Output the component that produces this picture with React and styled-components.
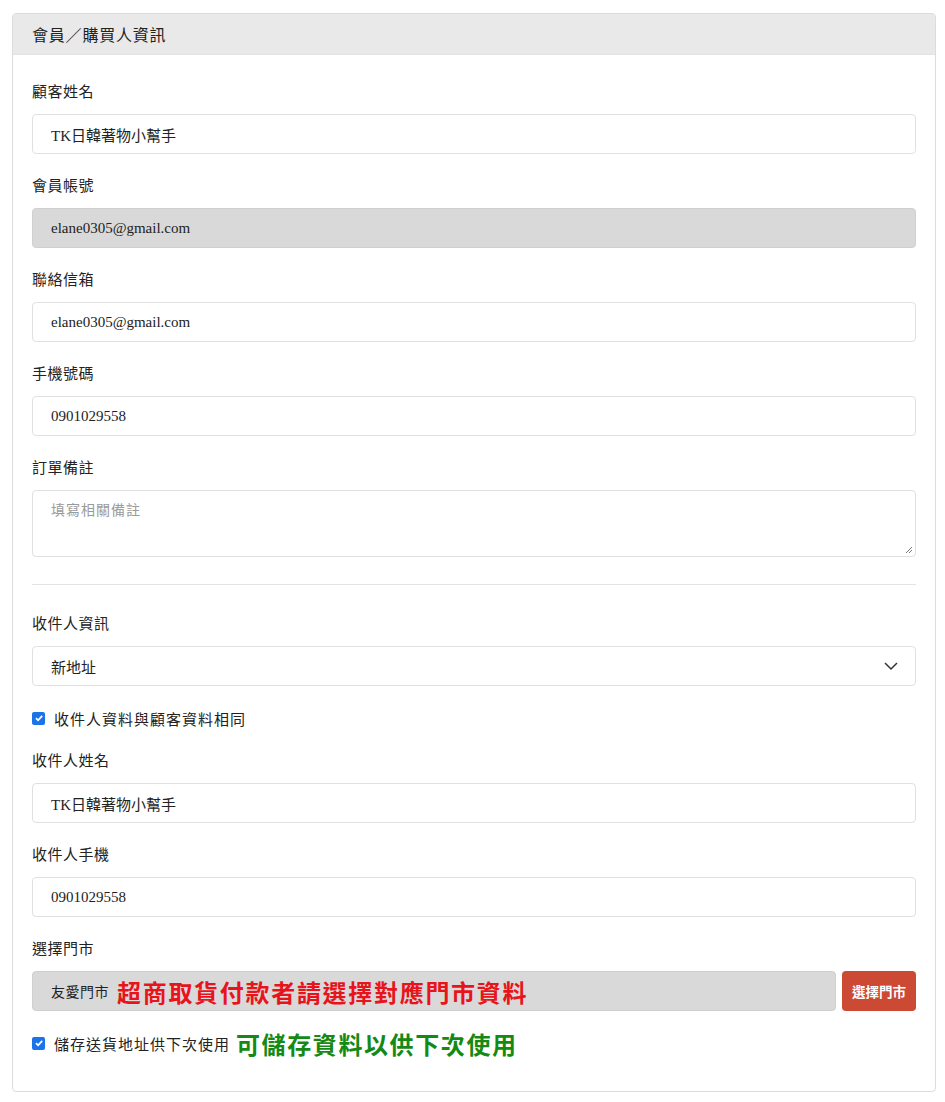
import React from 'react'
import styled, { createGlobalStyle } from 'styled-components'

const GlobalStyle = createGlobalStyle`
  html, body {
    margin: 0;
    padding: 0;
    background: #ffffff;
  }
  body {
    font-family: "Noto Sans CJK TC", "Noto Sans", sans-serif;
    color: #212529;
  }
`

const Page = styled.div`
  padding: 13px 9px 12px 12px;
`

const Card = styled.div`
  border: 1px solid #dcdcdc;
  border-radius: 4px;
  background: #ffffff;
  overflow: hidden;
`

const CardHeader = styled.div`
  background: #e9e9e9;
  height: 40px;
  display: flex;
  align-items: center;
  padding: 0 19px;
  font-size: 16px;
  letter-spacing: 0.8px;
  color: #222;
  border-bottom: 1px solid #e2e2e2;
`

const CardBody = styled.div`
  padding: 26px 19px 36px 19px;
`

const Group = styled.div`
  margin-bottom: ${p => p.$mb ?? 21}px;
`

const Label = styled.div`
  font-size: 15px;
  letter-spacing: 0.5px;
  line-height: 20px;
  height: 20px;
  margin-bottom: 13px;
  color: #222;
`

const Input = styled.div`
  box-sizing: border-box;
  height: 40px;
  border: 1px solid #e0e0e0;
  border-radius: 4px;
  background: ${p => (p.$disabled ? '#d9d9d9' : '#ffffff')};
  border-color: ${p => (p.$disabled ? '#cfcfcf' : '#e0e0e0')};
  padding: 0 18px;
  display: flex;
  align-items: center;
  font-family: "Liberation Serif", "Noto Sans CJK TC", serif;
  font-size: 15px;
  color: #222;
  flex: 1;
  min-width: 0;
`

const TextArea = styled.div`
  box-sizing: border-box;
  height: 67px;
  border: 1px solid #e0e0e0;
  border-radius: 4px;
  padding: 8px 18px;
  font-size: 14px;
  color: #9a9a9a;
  letter-spacing: 1px;
  position: relative;
`

const Grip = styled.svg`
  position: absolute;
  right: 2px;
  bottom: 2px;
`

const Divider = styled.hr`
  border: none;
  border-top: 1px solid #e3e3e3;
  margin: 27px 0 28px 0;
`

const Select = styled(Input)`
  justify-content: space-between;
  font-family: "Noto Sans CJK TC", sans-serif;
  padding-right: 16px;
`

const CheckRow = styled.label`
  display: flex;
  align-items: center;
  gap: 9px;
  font-size: 15px;
  letter-spacing: 1px;
  color: #222;
  height: 24px;
  margin: ${p => p.$m || '0'};
`

const Box = styled.span`
  width: 13px;
  height: 13px;
  border-radius: 2px;
  background: #1a73e8;
  display: inline-flex;
  align-items: center;
  justify-content: center;
  flex: none;
`

const StoreRow = styled.div`
  display: flex;
  gap: 6px;
`

const StoreInput = styled(Input)`
  font-family: "Noto Sans CJK TC", sans-serif;
  font-size: 14px;
  letter-spacing: 0.5px;
  gap: 6px;
`

const Red = styled.span`
  color: #e8141b;
  font-size: 24px;
  font-weight: 700;
  letter-spacing: 1.7px;
  margin-left: 2px;
`

const Green = styled.span`
  color: #148a14;
  font-size: 24px;
  font-weight: 700;
  letter-spacing: 1.6px;
  margin-left: -3px;
`

const StoreButton = styled.button`
  width: 74px;
  height: 40px;
  border: none;
  border-radius: 4px;
  background: #cc4a33;
  color: #fff;
  font-family: "Noto Sans CJK TC", sans-serif;
  font-size: 13.5px;
  font-weight: 700;
  flex: none;
  padding: 0;
`

const Check = () => (
  <Box>
    <svg width="10" height="10" viewBox="0 0 10 10">
      <path d="M2 5.2 L4.1 7.3 L8.2 2.8" fill="none" stroke="#fff" strokeWidth="1.8" />
    </svg>
  </Box>
)

const Field = ({ label, children, mb }) => (
  <Group $mb={mb}>
    <Label>{label}</Label>
    {children}
  </Group>
)

export default function App() {
  return (
    <>
      <GlobalStyle />
      <Page>
        <Card>
          <CardHeader>會員／購買人資訊</CardHeader>
          <CardBody>
            <Field label="顧客姓名">
              <Input>TK日韓著物小幫手</Input>
            </Field>
            <Field label="會員帳號">
              <Input $disabled>elane0305@gmail.com</Input>
            </Field>
            <Field label="聯絡信箱">
              <Input>elane0305@gmail.com</Input>
            </Field>
            <Field label="手機號碼">
              <Input>0901029558</Input>
            </Field>
            <Field label="訂單備註" mb={0}>
              <TextArea>
                填寫相關備註
                <Grip width="8" height="8" viewBox="0 0 8 8">
                  <path d="M7 1 L1 7 M7 4 L4 7" stroke="#777" strokeWidth="1" />
                </Grip>
              </TextArea>
            </Field>
            <Divider />
            <Field label="收件人資訊" mb={20}>
              <Select>
                新地址
                <svg width="16" height="16" viewBox="0 0 16 16">
                  <path d="M2 5 L8 11 L14 5" fill="none" stroke="#333" strokeWidth="1.5" />
                </svg>
              </Select>
            </Field>
            <CheckRow $m="0 0 20px 0">
              <Check />
              收件人資料與顧客資料相同
            </CheckRow>
            <Field label="收件人姓名">
              <Input>TK日韓著物小幫手</Input>
            </Field>
            <Field label="收件人手機">
              <Input>0901029558</Input>
            </Field>
            <Field label="選擇門市" mb={20}>
              <StoreRow>
                <StoreInput $disabled>
                  友愛門市 <Red>超商取貨付款者請選擇對應門市資料</Red>
                </StoreInput>
                <StoreButton>選擇門市</StoreButton>
              </StoreRow>
            </Field>
            <CheckRow>
              <Check />
              儲存送貨地址供下次使用
              <Green>可儲存資料以供下次使用</Green>
            </CheckRow>
          </CardBody>
        </Card>
      </Page>
    </>
  )
}
